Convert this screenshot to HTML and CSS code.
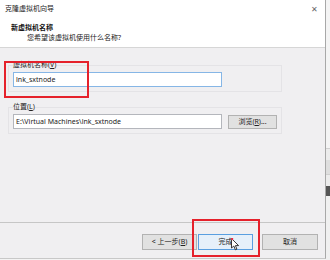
FILE: index.html
```html
<!DOCTYPE html>
<html>
	<head>
		<meta charset="utf-8" />
		<title>克隆虚拟机向导</title>
		<link rel="stylesheet" href="styles.css">
	</head>
	<body>
		<div class="screen">
			<div class="dialog">
				<div class="header">
					<div class="titlebar">
						<span class="title">克隆虚拟机向导</span>
						<span class="close">✕</span>
					</div>
					<div class="step">新虚拟机名称</div>
					<div class="sub">您希望该虚拟机使用什么名称?</div>
				</div>
				<div class="content">
					<fieldset class="group">
						<legend>虚拟机名称(<u>V</u>)</legend>
						<div class="row">
							<div class="input focus">lnk_sxtnode</div>
						</div>
					</fieldset>
					<fieldset class="group second">
						<legend>位置(<u>L</u>)</legend>
						<div class="row">
							<div class="input">E:\Virtual Machines\lnk_sxtnode</div>
							<div class="btn browse">浏览(<u>R</u>)...</div>
						</div>
					</fieldset>
				</div>
				<div class="footer">
					<div class="btn back">&lt; 上一步(<u>B</u>)</div>
					<div class="btn finish">完成</div>
					<div class="btn cancel">取消</div>
				</div>
			</div>
			<div class="side">
				<div class="s1"></div>
				<div class="s2"></div>
				<div class="s3"></div>
				<div class="s4"></div>
				<div class="s5"></div>
				<div class="s6"></div>
			</div>
			<!-- 标注框 -->
			<div class="mark mark-name"></div>
			<div class="mark mark-finish"></div>
			<svg class="cursor" width="9" height="13" viewBox="0 0 9 13">
				<path d="M0.5 0.5 L0.5 10 L2.8 8 L4.4 11.8 L5.9 11.1 L4.4 7.6 L7.6 7.6 Z" fill="#fff" stroke="#222" stroke-width="0.9"/>
				<circle cx="1" cy="1" r="1.3" fill="#e0304a"/>
			</svg>
		</div>
	</body>
</html>
```

FILE: styles.css
```css
* {
	padding: 0px;
	margin: 0px;
	box-sizing: border-box;
}

body {
	width: 330px;
	height: 260px;
	overflow: hidden;
	background: #f3f3f3;
	font-family: "Noto Sans", "Noto Sans CJK SC", sans-serif;
	font-size: 7px;
	color: #1b1b1b;
}

u {
	text-decoration: underline;
}

.screen {
	position: relative;
	display: flex;
	width: 330px;
	height: 260px;
}

.dialog {
	width: 326px;
	height: 259px;
	display: flex;
	flex-direction: column;
	background: #f0eff1;
	border-right: 1px solid #a8a8a8;
	border-bottom: 1px solid #c8c8c8;
}

.header {
	height: 48px;
	background: #fff;
	border-bottom: 1px solid #d6d6d6;
}

.titlebar {
	display: flex;
	justify-content: space-between;
	align-items: center;
	height: 10px;
	margin-top: 4px;
	padding: 0 7px 0 5px;
	line-height: 10px;
}

.close {
	font-size: 8px;
	color: #666;
}

.step {
	margin-top: 9px;
	padding-left: 11px;
	line-height: 10px;
	font-weight: bold;
	color: #111;
}

.sub {
	padding-left: 27px;
	line-height: 10px;
	color: #222;
}

.content {
	flex: 1;
	padding: 12px 0 0 8px;
}

.group {
	width: 274px;
	border: 1px solid #e4e3e6;
	padding: 2px 4px 4px 4px;
}

.group legend {
	line-height: 10px;
	padding: 0;
	color: #222;
}

.second {
	margin-top: 10px;
}

.row {
	display: flex;
	gap: 6px;
}

.input {
	width: 209px;
	height: 15px;
	line-height: 13px;
	padding-left: 2px;
	background: #fff;
	border: 1px solid #b4b6bc;
	white-space: nowrap;
	overflow: hidden;
}

.focus {
	border-color: #86b6e6;
}

.btn {
	height: 15px;
	line-height: 13px;
	text-align: center;
	background: #e1e1e1;
	border: 1px solid #b2b2b2;
	color: #222;
	white-space: nowrap;
}

.browse {
	width: 49px;
	margin-top: 1px;
	height: 14px;
	line-height: 12px;
}

.footer {
	height: 36px;
	border-top: 1px solid #c6c6c6;
	display: flex;
	padding: 11px 0 0 142px;
}

.footer .btn {
	height: 16px;
	line-height: 14px;
}

.back {
	width: 55px;
}

.finish {
	width: 55px;
	margin-left: 1px;
	background: #e6f0fa;
	border-color: #5a9fe0;
}

.cancel {
	width: 56px;
	margin-left: 9px;
}

.side {
	width: 4px;
	display: flex;
	flex-direction: column;
}

.s1 {
	height: 148px;
	background: #f4f4f4;
}

.s2 {
	height: 12px;
	border-top: 1px solid #d0d0d0;
	background: #ececec;
}

.s3 {
	height: 14px;
	background: #dedede;
}

.s4 {
	height: 12px;
	background: #ececec;
	border-top: 1px solid #cfcfcf;
}

.s5 {
	height: 10px;
	background: #555;
}

.s6 {
	flex: 1;
	background: #f0f0f0;
}

/* 红色标注 */
.mark {
	position: absolute;
	border: 2px solid #e5212b;
}

.mark-name {
	left: 4px;
	top: 61px;
	width: 85px;
	height: 37px;
}

.mark-finish {
	left: 192px;
	top: 219px;
	width: 68px;
	height: 38px;
}

.cursor {
	position: absolute;
	left: 231px;
	top: 238px;
}
```
